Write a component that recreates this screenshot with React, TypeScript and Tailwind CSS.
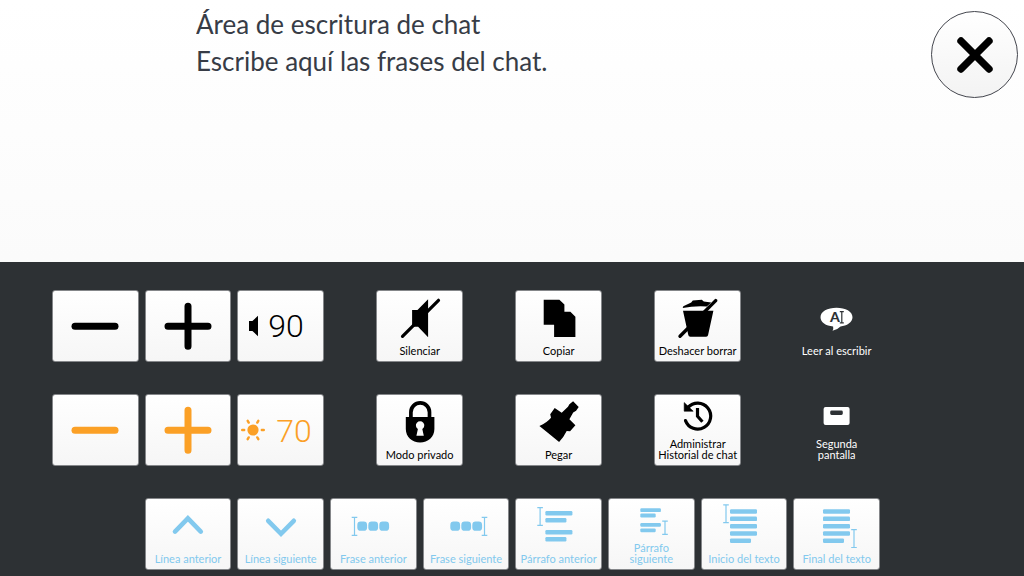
import type { ReactNode } from 'react';

const CARD =
  'h-[72px] rounded-[3px] border border-[#85878a] bg-linear-to-b from-white to-[#f6f6f6] overflow-hidden cursor-pointer';

type KeyProps = {
  label: string;
  lines?: string[];
  className: string;
  bare?: boolean;
  children: ReactNode;
};

function Key({ label, lines, className, bare, children }: KeyProps) {
  const rows = lines ?? [label];
  const look = bare ? 'h-[72px] border border-transparent cursor-pointer' : CARD;
  return (
    <button type="button" className={`col-span-2 flex flex-col items-center ${look} ${className}`}>
      <svg
        viewBox={rows.length > 1 ? '0 0 84 43' : '0 0 84 54'}
        className={`w-[84px] shrink-0 overflow-visible ${rows.length > 1 ? 'h-[43px]' : 'h-[54px]'}`}
        fill="currentColor"
        aria-hidden="true"
      >
        {children}
      </svg>
      <span className="text-[11px] leading-[11px] whitespace-nowrap">
        {rows.map((row) => (
          <span key={row} className="block">
            {row}
          </span>
        ))}
      </span>
    </button>
  );
}

function SignKey({ label, plus, className }: { label: string; plus?: boolean; className: string }) {
  return (
    <button type="button" aria-label={label} className={`col-span-2 flex justify-center ${CARD} ${className}`}>
      <svg viewBox="0 0 84 70" className="h-[70px] w-[84px] shrink-0" fill="none" stroke="currentColor" strokeWidth="7" strokeLinecap="round" aria-hidden="true">
        <path d={plus ? 'M22 35.3H62M42 15.3V55.3' : 'M22 35.3H62'} />
      </svg>
    </button>
  );
}

function Beam({ x, y1, y2 }: { x: number; y1: number; y2: number }) {
  return (
    <path
      d={`M${x} ${y1}V${y2}M${x - 2.8} ${y1}h5.6M${x - 2.8} ${y2}h5.6`}
      fill="none"
      stroke="currentColor"
      strokeWidth="1.2"
    />
  );
}

function Bars({ x, h, items }: { x: number; h: number; items: [number, number][] }) {
  return (
    <>
      {items.map(([y, w]) => (
        <rect key={y} x={x} y={y} width={w} height={h} rx="1.2" />
      ))}
    </>
  );
}

function Dots() {
  return (
    <>
      {[26.3, 37.3, 48.3].map((x) => (
        <rect key={x} x={x} y="22.6" width="9.8" height="9.2" rx="3.4" />
      ))}
    </>
  );
}

const PAGE_BARS: [number, number][] = [
  [10.3, 27],
  [17.6, 27],
  [24.9, 27],
  [32.2, 27],
  [39.4, 21],
];

export default function App() {
  return (
    <div className="flex min-h-screen flex-col bg-[#2d3134] font-['Lato','Liberation_Sans',sans-serif]">
      <header className="flex min-h-[262px] items-start bg-linear-to-b from-white to-[#fbfbfb] pr-[6px] pl-[196px]">
        <textarea
          aria-label="Área de escritura"
          spellCheck={false}
          className="mt-[6px] block h-[240px] min-w-0 flex-1 resize-none bg-transparent text-[26px] leading-[37px] text-[#373c46] outline-none"
          defaultValue={'Área de escritura de chat\nEscribe aquí las frases del chat.'}
        />
        <button
          type="button"
          aria-label="Cerrar"
          className="mt-[11px] flex size-[87px] shrink-0 cursor-pointer items-center justify-center rounded-full border border-[#44464e] bg-linear-to-b from-white to-[#f3f3f3] text-black"
        >
          <svg viewBox="0 0 40 40" className="size-[40px]" fill="none" stroke="currentColor" strokeWidth="7.4" strokeLinecap="round" aria-hidden="true">
            <path d="M6 6L34 34M34 6L6 34" />
          </svg>
        </button>
      </header>

      <main className="grid grid-cols-[repeat(18,minmax(0,1fr))] gap-x-[6px] gap-y-[32px] pt-[28px] pr-[144px] pb-[6px] pl-[52px] text-black">
        <SignKey label="Bajar volumen" className="col-start-1" />
        <SignKey label="Subir volumen" plus className="col-start-3" />
        <div className={`col-span-2 col-start-5 flex items-center gap-[10px] pl-[11px] ${CARD}`}>
          <svg viewBox="0 0 9 22" className="h-[22px] w-[9px] shrink-0" fill="currentColor" aria-hidden="true">
            <path d="M0 6H3.4L9 .8V21.2L3.4 16H0Z" />
          </svg>
          <output aria-label="Volumen" className="font-['Roboto',sans-serif] text-[32px] leading-[32px] font-light">90</output>
        </div>
        <Key label="Silenciar" className="col-start-8">
          <path d="M34.1 19H39.5L50.1 8.3V46.3L40.1 35.7H34.1Z" />
          <path d="M24.5 45.3L60.5 9.3" stroke="currentColor" strokeWidth="3.2" strokeLinecap="round" />
        </Key>
        <Key label="Copiar" className="col-start-11">
          <path d="M26.7 8.7H42.4L47.4 13.5V20.7H53.4L58.4 25.7V46H37.1V33.7H26.7Z" />
        </Key>
        <Key label="Deshacer borrar" className="col-start-14">
          <path d="M27 19.7H57.4L52.1 44Q51.8 45.7 50.1 45.7H34.3Q32.6 45.7 32.3 44Z" />
          <path d="M26.7 17L27.3 15.2L35.2 11.4L36.8 9.6L45.8 8.8L47.8 10.5L55.2 11.4L50.8 15.4Q38 14.6 26.7 17Z" />
          <path d="M24 45.3L59.7 9.6" stroke="currentColor" strokeWidth="3.4" strokeLinecap="round" />
        </Key>
        <Key label="Leer al escribir" bare className="col-start-17 text-white">
          <path d="M41.5 16.8C50.5 16.8 57.5 20.6 57.5 26.2C57.5 31.4 51.7 34.8 45.5 35.4Q42.5 38.6 37.5 39.8Q38.7 37.6 38.1 35.4C30.9 34.8 25.5 31.4 25.5 26.2C25.5 20.6 32.5 16.8 41.5 16.8Z" />
          <text x="40" y="31" textAnchor="middle" fontSize="14" fontWeight="900" fill="#2d3134">
            A
          </text>
          <path d="M46.8 20.6V31.8M44.8 20.6h4M44.8 31.8h4" stroke="#2d3134" strokeWidth="1.2" />
        </Key>

        <SignKey label="Bajar brillo" className="col-start-1 text-[#fba026]" />
        <SignKey label="Subir brillo" plus className="col-start-3 text-[#fba026]" />
        <div className={`col-span-2 col-start-5 flex items-center gap-[11px] pl-[3px] text-[#fba026] ${CARD}`}>
          <svg viewBox="-12 -12 24 24" className="size-[24px] shrink-0" fill="currentColor" aria-hidden="true">
            <circle r="5.6" />
            <path
              d="M-10.8 0H-8.8M10.8 0H8.8M-5.3 -9.2L-4.3 -7.4M5.3 -9.2L4.3 -7.4M-5.3 9.2L-4.3 7.4M5.3 9.2L4.3 7.4"
              stroke="currentColor"
              strokeWidth="2.4"
              strokeLinecap="round"
            />
          </svg>
          <output aria-label="Brillo" className="pt-[2px] font-['Roboto',sans-serif] text-[32px] leading-[32px] font-light">70</output>
        </div>
        <Key label="Modo privado" className="col-start-8">
          <path d="M32.9 23V17.2a9.3 9.3 0 0 1 18.6 0V23" fill="none" stroke="currentColor" strokeWidth="3.7" />
          <path
            fillRule="evenodd"
            d="M27.8 22H56.4V34C56.4 42 50.1 47.4 42.1 47.4S27.8 42 27.8 34ZM39.9 34L38.4 40.8H45.8L44.3 34A4.2 4.2 0 1 0 39.9 34Z"
          />
        </Key>
        <Key label="Pegar" className="col-start-11">
          <path d="M22.4 31Q30 27.6 34 22.7L33.2 19.3L37.7 13L44.7 17.7L51 11.7L52.4 9.3L56.1 6.3L61.7 12L59.1 15.7L56.2 17.6L52.4 24.3L58.4 30.3L53.1 36.3L49.7 36Q46.6 42.4 42.1 47Q33 39.5 22.4 31Z" />
        </Key>
        <Key label="Administrar Historial de chat" lines={['Administrar', 'Historial de chat']} className="col-start-14">
          <path d="M32 12.4A13 13 0 1 1 29.5 25.6" fill="none" stroke="currentColor" strokeWidth="3.2" strokeLinecap="round" />
          <path d="M28.2 7.6L37.2 16.2H28.2Z" stroke="currentColor" strokeWidth=".6" strokeLinejoin="round" />
          <path d="M41.5 13V21.2L46.4 26.8" fill="none" stroke="currentColor" strokeWidth="3.2" />
        </Key>
        <Key label="Segunda pantalla" lines={['Segunda', 'pantalla']} bare className="col-start-17 text-white">
          <path
            fillRule="evenodd"
            d="M30.6 12H52.6Q54.6 12 54.6 14V28Q54.6 30 52.6 30H30.6Q28.6 30 28.6 28V14Q28.6 12 30.6 12ZM36.6 15.6Q35.2 15.6 35.2 17V18.6Q35.2 20 36.6 20H46.4Q47.8 20 47.8 18.6V17Q47.8 15.6 46.4 15.6Z"
          />
        </Key>

        <Key label="Línea anterior" className="col-start-3 text-[#82c9ee]">
          <path d="M29 32.6L41.9 19.4L54.8 32.6" fill="none" stroke="currentColor" strokeWidth="4.6" strokeLinecap="round" />
        </Key>
        <Key label="Línea siguiente" className="col-start-5 text-[#82c9ee]">
          <path d="M29.2 21.8L42 34.8L54.8 21.8" fill="none" stroke="currentColor" strokeWidth="4.6" strokeLinecap="round" />
        </Key>
        <Key label="Frase anterior" className="col-start-7 text-[#82c9ee]">
          <Beam x={23.5} y1={18.3} y2={36.3} />
          <Dots />
        </Key>
        <Key label="Frase siguiente" className="col-start-9 text-[#82c9ee]">
          <Dots />
          <Beam x={60.5} y1={18.3} y2={36.3} />
        </Key>
        <Key label="Párrafo anterior" className="col-start-11 text-[#82c9ee]">
          <Beam x={23.1} y1={8.6} y2={26.3} />
          <Bars x={28.4} h={4.4} items={[[12, 27], [19, 21], [31, 27], [38, 21]]} />
        </Key>
        <Key label="Párrafo siguiente" lines={['Párrafo', 'siguiente']} className="col-start-13 text-[#82c9ee]">
          <Bars x={31.3} h={3.8} items={[[9.3, 20.6], [14.6, 15.4], [24, 20.6], [29.4, 15.4]]} />
          <Beam x={56} y1={22.2} y2={35.4} />
        </Key>
        <Key label="Inicio del texto" className="col-start-15 text-[#82c9ee]">
          <Beam x={24} y1={5.9} y2={23.7} />
          <Bars x={28} h={4.5} items={PAGE_BARS} />
        </Key>
        <Key label="Final del texto" className="col-start-17 text-[#82c9ee]">
          <Bars x={28} h={4.5} items={PAGE_BARS} />
          <Beam x={59} y1={30.6} y2={48.5} />
        </Key>
      </main>
    </div>
  );
}
